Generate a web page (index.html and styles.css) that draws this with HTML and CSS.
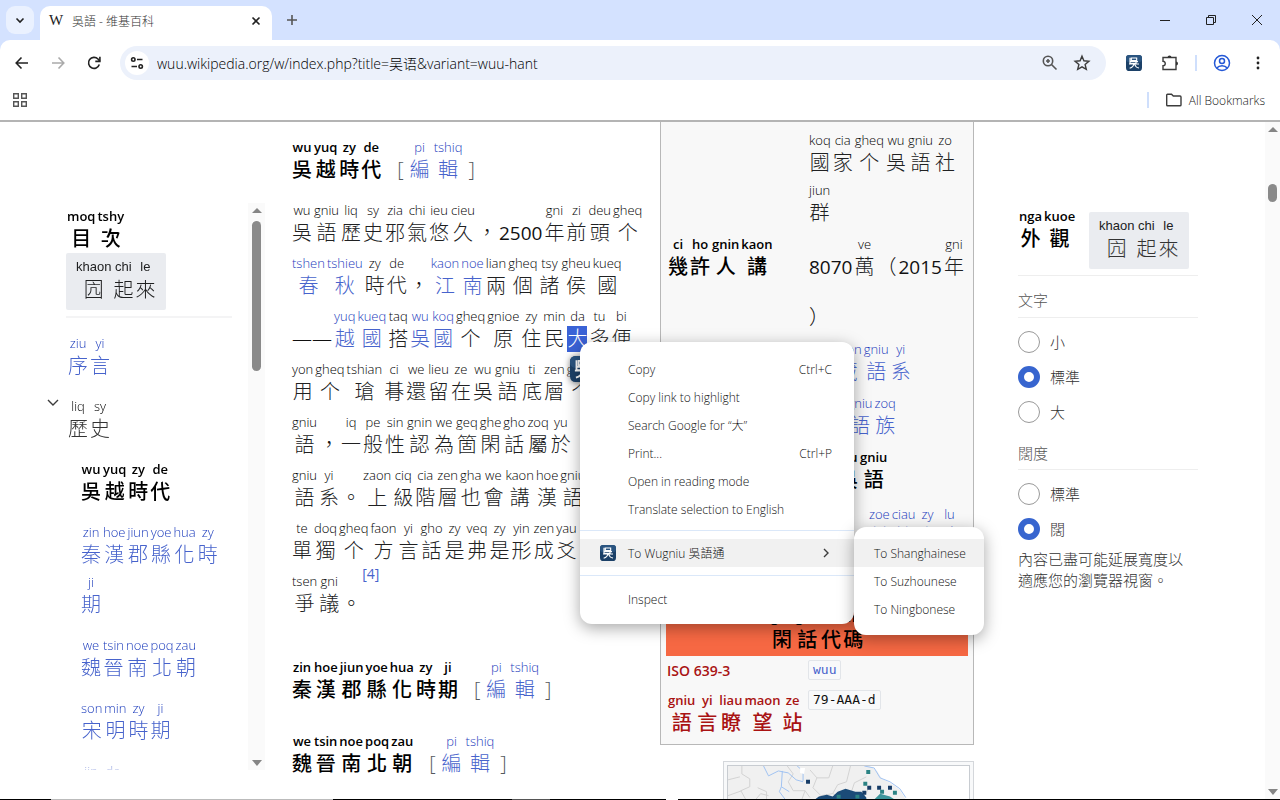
FILE: index.html
```html
<!DOCTYPE html>
<html lang="zh-Hant">
<head>
<meta charset="utf-8">
<title>吳語 - 维基百科</title>
<link rel="stylesheet" href="styles.css">
</head>
<body>
<svg class="defs" width="0" height="0" aria-hidden="true">
  <symbol id="wu" viewBox="0 0 24 24">
    <rect width="24" height="24" rx="5" fill="#1c4168"/>
    <rect width="24" height="11" rx="5" fill="#2a5480"/>
    <path d="M8 4.500h8v4H8zM6 4v6h12M15 10v3M4.500 13.500h15M11.500 13.500c0 3-2 5-6 6.500M13 14c1 3 3 5 6.500 5.500M6 7.500v5.500h10" fill="none" stroke="#fff" stroke-width="1.700"/>
  </symbol>
</svg>

<header class="browser">
  <div class="tabs">
    <button class="tab-search" aria-label="Search tabs"><svg width="16" height="16" viewBox="0 0 16 16"><path d="M4.500 6.500 8 10l3.500-3.500" class="s2"/></svg></button>
    <div class="tab"><span class="w">W</span><span class="tab-title">吳語 - 维基百科</span><button aria-label="Close tab"><svg width="14" height="14" viewBox="0 0 14 14"><path d="m3.500 3.500 7 7m0-7-7 7" class="s2"/></svg></button></div>
    <button class="new-tab" aria-label="New tab"><svg width="16" height="16" viewBox="0 0 16 16"><path d="M8 3v10M3 8h10" class="s2 soft"/></svg></button>
    <div class="window">
      <button aria-label="Minimize"><svg width="14" height="14" viewBox="0 0 14 14"><path d="M2 7.500h10" class="s1"/></svg></button>
      <button aria-label="Restore"><svg width="14" height="14" viewBox="0 0 14 14"><path d="M2.500 4.500h7v7h-7zM4.500 4.500v-2h7v7h-2" class="s1"/></svg></button>
      <button aria-label="Close"><svg width="14" height="14" viewBox="0 0 14 14"><path d="m2 2 10 10m0-10L2 12" class="s1"/></svg></button>
    </div>
  </div>
  <div class="toolbar">
    <button aria-label="Back"><svg width="20" height="20" viewBox="0 0 20 20"><path d="M16 10H4.500m5-5.500L4.200 10l5.300 5.500" class="s2"/></svg></button>
    <button aria-label="Forward" disabled><svg width="20" height="20" viewBox="0 0 20 20"><path d="M4 10h11.500m-5-5.500 5.300 5.500-5.300 5.500" class="s2 dim"/></svg></button>
    <button aria-label="Reload"><svg width="20" height="20" viewBox="0 0 20 20"><path d="M15.300 11.500A5.500 5.500 0 1 1 14 6l1.800 2.200" class="s2"/><path d="M15.900 3.800v4.600h-4.600" class="s2"/></svg></button>
    <div class="address">
      <button class="site" aria-label="Site information"><svg width="16" height="16" viewBox="0 0 16 16"><path d="M8 4.500h5.500M2.500 11.500H8" class="s2"/><circle cx="4.300" cy="4.500" r="1.700" class="s2"/><circle cx="11.700" cy="11.500" r="1.700" class="s2"/></svg></button>
      <input aria-label="Address" value="wuu.wikipedia.org/w/index.php?title=吴语&amp;variant=wuu-hant">
      <button aria-label="Zoom"><svg width="18" height="18" viewBox="0 0 18 18"><circle cx="7" cy="7" r="4.700" class="s2 soft"/><path d="m10.500 10.500 5 5M7 5v4M5 7h4" class="s2 soft"/></svg></button>
      <button aria-label="Bookmark"><svg width="18" height="18" viewBox="0 0 18 18"><path d="m9 2.200 1.900 4.600 5 .4-3.800 3.300 1.200 4.900L9 12.800l-4.300 2.600 1.200-4.900-3.800-3.300 5-.4z" class="s15"/></svg></button>
    </div>
    <div class="actions">
      <button aria-label="Wugniu"><svg width="16" height="16"><use href="#wu"/></svg></button>
      <button aria-label="Extensions"><svg width="18" height="18" viewBox="0 0 18 18"><path d="M2 3.500h13v12H2v-3.700c3 0 3-4.600 0-4.600z" class="s15"/><path d="M6.500 3.500a2 2 0 0 1 4 0zM15 7.500a2 2 0 0 1 0 4z" fill="#333"/></svg></button>
      <i class="bar"></i>
      <button aria-label="Profile"><svg width="18" height="18" viewBox="0 0 18 18" class="profile"><circle cx="9" cy="9" r="7.500"/><circle cx="9" cy="7" r="2.500"/><path d="M3.800 14c2.500-3 8-3 10.400 0"/></svg></button>
      <button aria-label="Menu"><svg width="18" height="18" viewBox="0 0 18 18" fill="#222"><circle cx="9" cy="4" r="1.400"/><circle cx="9" cy="9" r="1.400"/><circle cx="9" cy="14" r="1.400"/></svg></button>
    </div>
  </div>
  <div class="bookmarks">
    <button aria-label="Apps"><svg width="16" height="16" viewBox="0 0 16 16"><path d="M1.700 1.700h4.600v4.600H1.700zM9.700 1.700h4.600v4.600H9.700zM1.700 9.700h4.600v4.600H1.700zM9.700 9.700h4.600v4.600H9.700z" class="s15 soft"/></svg></button>
    <i class="bar"></i>
    <button class="all"><svg width="18" height="16" viewBox="0 0 18 16"><path d="M1.700 13V3q0-.8.800-.8H6.500L8.300 4H15q1 0 1 1v8q0 .8-1 .8H2.500q-.8 0-.8-.8z" class="s15"/></svg>All Bookmarks</button>
  </div>
</header>

<div class="viewport">
  <nav class="toc" aria-label="目次">
    <div class="toc-body">
      <h2 class="line"><ruby>目<rt>moq</rt></ruby><ruby>次<rt>tshy</rt></ruby></h2>
      <button class="hide"><ruby>囥<rt>khaon</rt></ruby><ruby>起<rt>chi</rt></ruby><ruby>來<rt>le</rt></ruby></button>
      <ul>
        <li><a href="#intro" class="line"><ruby>序<rt>ziu</rt></ruby><ruby>言<rt>yi</rt></ruby></a></li>
        <li class="parent"><button class="chev" aria-label="Toggle section"><svg width="14" height="14" viewBox="0 0 14 14"><path d="m2 4 5 5 5-5" class="s15"/></svg></button><a href="#history" class="line plain"><ruby>歷<rt>liq</rt></ruby><ruby>史<rt>sy</rt></ruby></a>
          <ul>
            <li><a href="#wuyue" class="line current"><ruby>吳<rt>wu</rt></ruby><ruby>越<rt>yuq</rt></ruby><ruby>時<rt>zy</rt></ruby><ruby>代<rt>de</rt></ruby></a></li>
            <li><a href="#qinhan" class="line"><ruby>秦<rt>zin</rt></ruby><ruby>漢<rt>hoe</rt></ruby><ruby>郡<rt>jiun</rt></ruby><ruby>縣<rt>yoe</rt></ruby><ruby>化<rt>hua</rt></ruby><ruby>時<rt>zy</rt></ruby><ruby>期<rt>ji</rt></ruby></a></li>
            <li><a href="#weijin" class="line"><ruby>魏<rt>we</rt></ruby><ruby>晉<rt>tsin</rt></ruby><ruby>南<rt>noe</rt></ruby><ruby>北<rt>poq</rt></ruby><ruby>朝<rt>zau</rt></ruby></a></li>
            <li><a href="#songming" class="line"><ruby>宋<rt>son</rt></ruby><ruby>明<rt>min</rt></ruby><ruby>時<rt>zy</rt></ruby><ruby>期<rt>ji</rt></ruby></a></li>
            <li><a href="#modern" class="line"><ruby>近<rt>jin</rt></ruby><ruby>代<rt>de</rt></ruby></a></li>
          </ul>
        </li>
      </ul>
    </div>
    <div class="scroll"><i class="up"></i><i class="thumb"></i><i class="down"></i></div>
  </nav>

  <main>
    <h2 class="line" id="wuyue"><ruby>吳<rt>wu</rt></ruby><ruby>越<rt>yuq</rt></ruby><ruby>時<rt>zy</rt></ruby><ruby>代<rt>de</rt></ruby><span class="edit">[<a href="#edit"><ruby>編<rt>pi</rt></ruby><ruby>輯<rt>tshiq</rt></ruby></a>]</span></h2>
    <div class="text">
      <div class="line"><ruby>吳<rt>wu</rt></ruby><ruby>語<rt>gniu</rt></ruby><ruby>歷<rt>liq</rt></ruby><ruby>史<rt>sy</rt></ruby><ruby>邪<rt>zia</rt></ruby><ruby>氣<rt>chi</rt></ruby><ruby>悠<rt>ieu</rt></ruby><ruby>久<rt>cieu</rt></ruby><b>，</b><b class="num">2500</b><ruby>年<rt>gni</rt></ruby><ruby>前<rt>zi</rt></ruby><ruby>頭<rt>deu</rt></ruby><ruby>个<rt>gheq</rt></ruby></div>
      <div class="line"><a href="#spring"><ruby>春<rt>tshen</rt></ruby><ruby>秋<rt>tshieu</rt></ruby></a><ruby>時<rt>zy</rt></ruby><ruby>代<rt>de</rt></ruby><b>，</b><a href="#jiangnan"><ruby>江<rt>kaon</rt></ruby><ruby>南<rt>noe</rt></ruby></a><ruby>兩<rt>lian</rt></ruby><ruby>個<rt>gheq</rt></ruby><ruby>諸<rt>tsy</rt></ruby><ruby>侯<rt>gheu</rt></ruby><ruby>國<rt>kueq</rt></ruby></div>
      <div class="line"><b>——</b><a href="#yue"><ruby>越<rt>yuq</rt></ruby><ruby>國<rt>kueq</rt></ruby></a><ruby>搭<rt>taq</rt></ruby><a href="#wuguo"><ruby>吳<rt>wu</rt></ruby><ruby>國<rt>koq</rt></ruby></a><ruby>个<rt>gheq</rt></ruby><ruby>原<rt>gnioe</rt></ruby><ruby>住<rt>zy</rt></ruby><ruby>民<rt>min</rt></ruby><ruby class="sel"><mark>大</mark><rt>da</rt></ruby><ruby>多<rt>tu</rt></ruby><ruby>便<rt>bi</rt></ruby></div>
      <div class="line"><ruby>用<rt>yon</rt></ruby><ruby>个<rt>gheq</rt></ruby><ruby>瑲<rt>tshian</rt></ruby><ruby>朞<rt>ci</rt></ruby><ruby>還<rt>we</rt></ruby><ruby>留<rt>lieu</rt></ruby><ruby>在<rt>ze</rt></ruby><ruby>吳<rt>wu</rt></ruby><ruby>語<rt>gniu</rt></ruby><ruby>底<rt>ti</rt></ruby><ruby>層<rt>zen</rt></ruby><ruby>个<rt>gheq</rt></ruby></div>
      <div class="line"><ruby>語<rt>gniu</rt></ruby><b>，</b><ruby>一<rt>iq</rt></ruby><ruby>般<rt>pe</rt></ruby><ruby>性<rt>sin</rt></ruby><ruby>認<rt>gnin</rt></ruby><ruby>為<rt>we</rt></ruby><ruby>箇<rt>geq</rt></ruby><ruby>閑<rt>ghe</rt></ruby><ruby>話<rt>gho</rt></ruby><ruby>屬<rt>zoq</rt></ruby><ruby>於<rt>yu</rt></ruby></div>
      <div class="line"><ruby>語<rt>gniu</rt></ruby><ruby>系<rt>yi</rt></ruby><b>。</b><ruby>上<rt>zaon</rt></ruby><ruby>級<rt>ciq</rt></ruby><ruby>階<rt>cia</rt></ruby><ruby>層<rt>zen</rt></ruby><ruby>也<rt>gha</rt></ruby><ruby>會<rt>we</rt></ruby><ruby>講<rt>kaon</rt></ruby><ruby>漢<rt>hoe</rt></ruby><ruby>語<rt>gniu</rt></ruby></div>
      <div class="line"><ruby>單<rt>te</rt></ruby><ruby>獨<rt>doq</rt></ruby><ruby>个<rt>gheq</rt></ruby><ruby>方<rt>faon</rt></ruby><ruby>言<rt>yi</rt></ruby><ruby>話<rt>gho</rt></ruby><ruby>是<rt>zy</rt></ruby><ruby>弗<rt>veq</rt></ruby><ruby>是<rt>zy</rt></ruby><ruby>形<rt>yin</rt></ruby><ruby>成<rt>zen</rt></ruby><ruby>爻<rt>yau</rt></ruby></div>
      <div class="line"><ruby>爭<rt>tsen</rt></ruby><ruby>議<rt>gni</rt></ruby><b>。</b><a href="#cite4" class="cite">[4]</a></div>
    </div>
    <h2 class="line" id="qinhan"><ruby>秦<rt>zin</rt></ruby><ruby>漢<rt>hoe</rt></ruby><ruby>郡<rt>jiun</rt></ruby><ruby>縣<rt>yoe</rt></ruby><ruby>化<rt>hua</rt></ruby><ruby>時<rt>zy</rt></ruby><ruby>期<rt>ji</rt></ruby><span class="edit">[<a href="#edit"><ruby>編<rt>pi</rt></ruby><ruby>輯<rt>tshiq</rt></ruby></a>]</span></h2>
    <h2 class="line" id="weijin"><ruby>魏<rt>we</rt></ruby><ruby>晉<rt>tsin</rt></ruby><ruby>南<rt>noe</rt></ruby><ruby>北<rt>poq</rt></ruby><ruby>朝<rt>zau</rt></ruby><span class="edit">[<a href="#edit"><ruby>編<rt>pi</rt></ruby><ruby>輯<rt>tshiq</rt></ruby></a>]</span></h2>
  </main>

  <aside class="side">
    <table class="infobox">
      <tr><th></th><td><div class="line"><ruby>國<rt>koq</rt></ruby><ruby>家<rt>cia</rt></ruby><ruby>个<rt>gheq</rt></ruby><ruby>吳<rt>wu</rt></ruby><ruby>語<rt>gniu</rt></ruby><ruby>社<rt>zo</rt></ruby></div><div class="line"><ruby>群<rt>jiun</rt></ruby></div></td></tr>
      <tr><th><div class="line"><ruby>幾<rt>ci</rt></ruby><ruby>許<rt>ho</rt></ruby><ruby>人<rt>gnin</rt></ruby><ruby>講<rt>kaon</rt></ruby></div></th><td><div class="line"><b class="num">8070</b><ruby>萬<rt>ve</rt></ruby><b>（</b><b class="num">2015</b><ruby>年<rt>gni</rt></ruby></div><div class="line"><b>）</b></div></td></tr>
      <tr class="family"><th></th><td><a href="#st" class="line"><ruby>漢<rt>hoe</rt></ruby><ruby>藏<rt>zaon</rt></ruby><ruby>語<rt>gniu</rt></ruby><ruby>系<rt>yi</rt></ruby></a><a href="#sinitic" class="line in1"><ruby>漢<rt>hoe</rt></ruby><ruby>語<rt>gniu</rt></ruby><ruby>族<rt>zoq</rt></ruby></a><div class="line in2 strong"><ruby>吳<rt>wu</rt></ruby><ruby>語<rt>gniu</rt></ruby></div></td></tr>
      <tr class="map-row"><th></th><td><a href="#lu" class="line in3"><ruby>前<rt>zoe</rt></ruby><ruby>教<rt>ciau</rt></ruby><ruby>字<rt>zy</rt></ruby><ruby>路<rt>lu</rt></ruby></a></td></tr>
      <tr><th colspan="2" class="band"><div class="line"><ruby>閑<rt>ghe</rt></ruby><ruby>話<rt>gho</rt></ruby><ruby>代<rt>de</rt></ruby><ruby>碼<rt>mo</rt></ruby></div></th></tr>
      <tr class="codes"><th>ISO 639-3</th><td><code><a href="#wuu">wuu</a></code></td></tr>
      <tr class="codes"><th><div class="line"><ruby>語<rt>gniu</rt></ruby><ruby>言<rt>yi</rt></ruby><ruby>瞭<rt>liau</rt></ruby><ruby>望<rt>maon</rt></ruby><ruby>站<rt>ze</rt></ruby></div></th><td><code>79-AAA-d</code></td></tr>
    </table>
    <figure><svg viewBox="0 0 244 60" width="100%" aria-label="Map">
      <rect width="244" height="60" fill="#fff"/>
      <path d="M0 0H143l8 5 5 8 8 4 10 7 6 10v26H0z" fill="#f0f0f0"/>
      <path d="M14 0v8l8 5v8l-9 4 5 9h10l5-6 8 2M0 14l12-3M0 30l14-5M60 0l6 8-5 8 5 9h12l5 7M83 4l7 8h12l4-12M90 12l-4 10 8 8 12-2 5-9 9-3 4-16M106 28l10 5 8-4 4-12 12-6M120 33l5 3 12-4 7-12M30 22l9 4v12M78 25l-4 11H60" fill="none" stroke="#d2d2d2"/>
      <path d="M36 0l5 10 10-5 10 2 8 7 7 2M55 5l-1 16 8 5M54 21l-2 5 6 8M70 0l6 5v10M138 0l10 2 6 10 10 4 10 7 6 9" fill="none" stroke="#9fc2f2"/>
      <path d="M73 2h5l-1 6-4-1z" fill="#fff"/>
      <path d="M85 36l7-5 8-2 6 2 5-5 8-3 10 3h6l5 6 2 28H85z" fill="#1b4b78"/>
      <path d="M148 34l6-6 10 3 8 5v24h-24z" fill="#3d969c"/>
      <g fill="#173c67"><path d="M79 14h4v4h-4zM141 20h4v4h-4zM151 20h4v4h-4zM162 20h4v4h-4zM136 25h4v4h-4z"/></g>
      <g fill="#2b8384"><path d="M140 4h4v4h-4zM137 16h4v4h-4zM154 24h4v4h-4zM167 25h4v4h-4zM110 29h4v4h-4zM129 29h4v4h-4z"/></g>
    </svg></figure>
  </aside>

  <aside class="look">
    <div class="look-head"><h2 class="line"><ruby>外<rt>nga</rt></ruby><ruby>觀<rt>kuoe</rt></ruby></h2><button class="hide"><ruby>囥<rt>khaon</rt></ruby><ruby>起<rt>chi</rt></ruby><ruby>來<rt>le</rt></ruby></button></div>
    <fieldset><legend>文字</legend>
      <label><input type="radio" name="size">小</label>
      <label><input type="radio" name="size" checked>標準</label>
      <label><input type="radio" name="size">大</label>
    </fieldset>
    <fieldset><legend>闊度</legend>
      <label><input type="radio" name="width">標準</label>
      <label><input type="radio" name="width" checked>闊</label>
    </fieldset>
    <p>內容已盡可能延展寬度以<br>適應您的瀏覽器視窗。</p>
  </aside>
  <div class="scroll page"><i class="up"></i><i class="thumb"></i><i class="down"></i></div>
</div>
<div class="taskbar"></div>

<svg class="float-icon" width="26" height="26"><use href="#wu"/></svg>
<div class="menu main-menu" role="menu">
  <button role="menuitem">Copy<kbd>Ctrl+C</kbd></button>
  <button role="menuitem">Copy link to highlight</button>
  <button role="menuitem">Search Google for “大”</button>
  <button role="menuitem">Print...<kbd>Ctrl+P</kbd></button>
  <button role="menuitem">Open in reading mode</button>
  <button role="menuitem">Translate selection to English</button>
  <hr>
  <button role="menuitem" class="on ext"><svg width="16" height="16"><use href="#wu"/></svg>To Wugniu 吳語通<svg class="arrow" width="12" height="12" viewBox="0 0 12 12"><path d="m4 2 4 4-4 4" class="s15"/></svg></button>
  <hr class="last">
  <button role="menuitem">Inspect</button>
</div>
<div class="menu sub-menu" role="menu">
  <button role="menuitem" class="on">To Shanghainese</button>
  <button role="menuitem">To Suzhounese</button>
  <button role="menuitem">To Ningbonese</button>
</div>
</body>
</html>
```
FILE: styles.css
```css
* { box-sizing: border-box; }
body {
  margin: 0;
  height: 100vh;
  display: flex;
  flex-direction: column;
  overflow: hidden;
  background: #fff;
  color: #202122;
  font-family: "Open Sans", "Noto Sans CJK TC", sans-serif;
  font-weight: 400;
}
button { border: 0; padding: 0; background: none; font: inherit; color: inherit; display: grid; place-items: center; }
a { color: #4763cc; text-decoration: none; }
ul { list-style: none; margin: 0; padding: 0; }
h2 { margin: 0; font-size: 20px; }
.defs { position: absolute; }
.s1, .s15, .s2 { fill: none; stroke: #222; stroke-width: 1; }
.s15 { stroke: #3c3c3c; stroke-width: 1.4; }
.s2 { stroke-width: 1.6; }
.soft { stroke: #555; }
.dim { stroke: #aaa; }

/* Browser frame */
.browser { flex: none; background: #d4e2ff; border-bottom: 2px solid #b4b4b4; }
.tabs { display: flex; height: 40px; padding-left: 6px; align-items: center; }
.tab-search { width: 28px; height: 28px; border-radius: 9px; background: #eaf1ff; }
.tab { align-self: flex-end; width: 232px; height: 34px; margin-left: 6px; padding: 0 9px; display: flex; align-items: center; background: #fff; border-radius: 10px 10px 0 0; font-size: 12px; }
.tab .w { font-family: "Liberation Serif", serif; font-size: 15px; width: 23px; }
.tab-title { flex: 1; font-weight: 300; color: #333; padding-bottom: 4px; }
.tab .w, .tab button { margin-bottom: 5px; }
.new-tab { width: 28px; margin-left: 6px; }
.window { margin-left: auto; display: flex; }
.window button { width: 46px; height: 40px; }
.toolbar { display: flex; align-items: center; height: 46px; padding: 0 4px; background: #fff; border-radius: 10px 10px 0 0; }
.toolbar > button { width: 36px; height: 36px; }
.address { flex: 1; display: flex; align-items: center; height: 34px; margin-left: 8px; padding: 0 10px 0 5px; border-radius: 17px; background: #ecf1fb; }
.address .site { width: 24px; height: 24px; border-radius: 12px; background: #fff; }
.address button { width: 28px; margin-right: 4px; }
.address .site { margin-right: 8px; }
.address button:last-child { margin-right: 0; }
.address input { flex: 1; border: 0; padding: 0; background: none; font: 300 14px "Open Sans", "Noto Sans CJK TC", sans-serif; color: #000; outline: 0; }
.actions { display: flex; align-items: center; margin-left: 10px; }
.actions button { width: 36px; }
.bar { width: 2px; height: 16px; margin: 0 7px; background: #cfdffc; }
.profile { fill: none; stroke: #2458d6; stroke-width: 1.5; }
.bookmarks { display: flex; align-items: center; height: 34px; padding: 0 15px 6px 12px; background: #fff; font-size: 12px; font-weight: 300; color: #222; }
.bookmarks .bar { margin: 0 16px 0 auto; }
.all { display: flex; align-items: center; gap: 6px; }

/* Annotated text: romanisation above each character */
.line { display: flex; align-items: flex-end; font-size: 20px; line-height: 26px; font-weight: 300; white-space: nowrap; }
.line > a { display: flex; }
.line b { font-weight: 300; padding: 0 1px; color: #111; }
.line .num { font-size: 19px; font-weight: 400; }
ruby { display: flex; flex-direction: column-reverse; align-items: center; min-width: 22px; padding: 0 1px; font-size: 20px; line-height: 26px; font-weight: 300; }
rt { display: block; font-size: 13px; line-height: 20px; font-weight: 350; color: #000; }
a rt, .edit a rt { color: #1c3cbc; }
.plain rt, .current rt { color: #000; }
h2 ruby, .strong ruby, th ruby, .current ruby { font-weight: 500; color: #000; }
h2 rt, .strong rt, th rt, .current rt { font-weight: 650; }

.viewport { flex: 1; min-height: 0; overflow: hidden; display: grid; grid-template-columns: 265px minmax(0, 1fr) 314px 291px 15px; }

/* Contents */
.toc { display: flex; margin-top: 81px; height: 567px; overflow: hidden; }
.toc-body { flex: 1; min-width: 0; padding: 3px 16px 0 66px; -webkit-mask: linear-gradient(#000 550px, transparent 576px); mask: linear-gradient(#000 550px, transparent 576px); }
.hide { display: flex; width: 100px; height: 57px; padding: 4px 0 0 9px; margin-top: 1px; align-items: flex-start; justify-content: flex-start; border-radius: 2px; background: #eaecf0; white-space: nowrap; }
.hide rt { font-family: "Liberation Sans", sans-serif; color: #202122; }
.toc ul { border-top: 2px solid #f4f4f5; margin-top: 6px; padding-top: 15px; }
.toc ul ul { border: 0; margin: 0; padding: 13px 0 0 13px; }
.toc li { display: grid; padding-left: 1px; margin-bottom: 13px; }
.toc li li { padding: 0; }
.toc li .line { flex-wrap: wrap; row-gap: 4px; padding-bottom: 4px; }
.toc .parent { position: relative; }
.toc .plain { color: #333; }
.chev { position: absolute; left: -20px; top: 0; }
.scroll { width: 17px; background: #fafafa; display: flex; flex-direction: column; align-items: center; }
.scroll .up, .scroll .down { border: 5px solid transparent; border-top-width: 0; border-bottom-color: #858585; margin: 5px 0 8px; }
.scroll .down { border-width: 6px 5px 0; border-top-color: #858585; margin: auto 0 4px; }
.thumb { width: 9px; height: 150px; border-radius: 5px; background: #8a8a8a; }
.page { width: 15px; }
.page .thumb { height: 18px; margin-top: 44px; }

/* Article */
main { padding: 15px 0 0 26px; overflow: hidden; }
main h2 { font-weight: 500; }
.edit { display: flex; align-items: flex-end; gap: 5px; margin-left: 15px; font-weight: 300; color: #54595d; }
.edit a { display: flex; gap: 2px; }
.edit ruby { font-weight: 300; color: #4763cc; }
.edit rt { font-weight: 350; }
.text { margin: 17px 0 40px; }
.text .line { margin-bottom: 7px; }
.text + h2 { margin-bottom: 28px; }
mark { background: #3a62d6; color: #fff; }
.sel rt { box-shadow: 0 1px #dcdcf5; }
.line .cite { font-size: 14px; font-weight: 400; align-self: flex-start; margin-top: -10px; }

/* Infobox */
.side { overflow: hidden; }
.infobox { width: 100%; table-layout: fixed; border: 1px solid #b8b8b8; border-top: 0; border-collapse: separate; background: #f8f8f8; border-spacing: 0; padding: 8px 5px 0; }
.infobox th, .infobox td { padding: 0 1px; text-align: left; vertical-align: top; }
.infobox th { width: 141px; }
.infobox td .line { min-height: 46px; margin-bottom: 4px; }
.infobox tr:nth-child(2) td { padding-bottom: 5px; }
.infobox tr:nth-child(1) td { padding-bottom: 4px; }
.infobox .family .line { margin-bottom: 8px; }
.infobox .map-row td { height: 101px; padding-top: 3px; }
.in1 { margin-left: 14px; }
.in2 { margin-left: 29px; }
.in3 { margin-left: 60px; }
.infobox th.band { background: #f66843; height: 54px; vertical-align: bottom; }
.band .line { justify-content: center; padding-bottom: 3px; }
.codes th { font-size: 14px; font-weight: 650; color: #a91313; line-height: 30px; }
.codes ruby, .codes rt { color: #a91313; }
.codes td { height: 30px; }
.codes:last-child th { height: 58px; padding-top: 4px; padding-bottom: 8px; }
.infobox .codes td { padding-top: 1px; }
code { display: inline-block; border: 1px solid #e2e5e9; border-radius: 2px; padding: 0 4px; font: 13px/18px "DejaVu Sans Mono", monospace; background: #f8f9fa; color: #111; }
figure { margin: 16px 0 0 63px; padding: 3px; border: 1px solid #d4d7db; background: #f8f9fa; }
figure svg { display: block; border: 1px solid #c8ccd1; }

/* Appearance panel */
.look { padding: 84px 67px 0 44px; font-size: 15px; font-weight: 300; color: #333; }
.look-head { display: flex; justify-content: space-between; height: 70px; padding-right: 9px; border-bottom: 1px solid #eee; }
.look-head .hide { margin-top: 6px; }
.look-head h2 { height: 46px; }
fieldset { border: 0; margin: 0 0 7px; padding: 0; min-width: 0; }
legend { display: block; width: 100%; height: 42px; margin-bottom: 6px; padding: 0; border-bottom: 1px solid #eee; line-height: 48px; color: #555; }
fieldset + fieldset legend { height: 34px; line-height: 34px; }
label { display: flex; align-items: center; gap: 10px; height: 35px; }
input[type="radio"] { appearance: none; width: 22px; height: 22px; margin: 0; border: 1px solid #999; border-radius: 50%; background: #fff; }
input[type="radio"]:checked { border: 6px solid #3765cf; }
.look p { margin: -4px 0 0; line-height: 21px; white-space: nowrap; }

.taskbar { flex: none; height: 1px; background: linear-gradient(90deg, #000 0 4%, #bbb 4% 26%, #000 26% 40%, #555 40% 43%, #000 43% 52%, #fff 52% 53%, #000 53%); }

/* Context menus */
.float-icon { position: absolute; left: 570px; top: 356px; filter: drop-shadow(0 1px 3px #888); }
.menu { position: absolute; background: #fff; border-radius: 12px; box-shadow: 0 4px 16px rgba(0, 0, 0, .35); padding: 12px 0; font-size: 12px; font-weight: 300; color: #111; white-space: nowrap; }
.menu button { display: flex; align-items: center; width: 100%; height: 28px; padding: 0 22px 0 20px; }
.menu kbd { margin-left: auto; font: inherit; }
.menu hr { margin: 7px 0 8px; border: 0; border-top: 1px solid #dbe8f9; }
.menu .last { margin: 8px 0 9px; }
.menu .on { background: #f1f1f1; }
.main-menu { left: 580px; top: 342px; width: 274px; padding: 13px 0 11px; }
.main-menu button { padding-left: 48px; }
.main-menu .ext { padding-left: 20px; gap: 12px; }
.main-menu .arrow { margin-left: auto; }
.sub-menu { left: 854px; top: 527px; width: 130px; }
```
